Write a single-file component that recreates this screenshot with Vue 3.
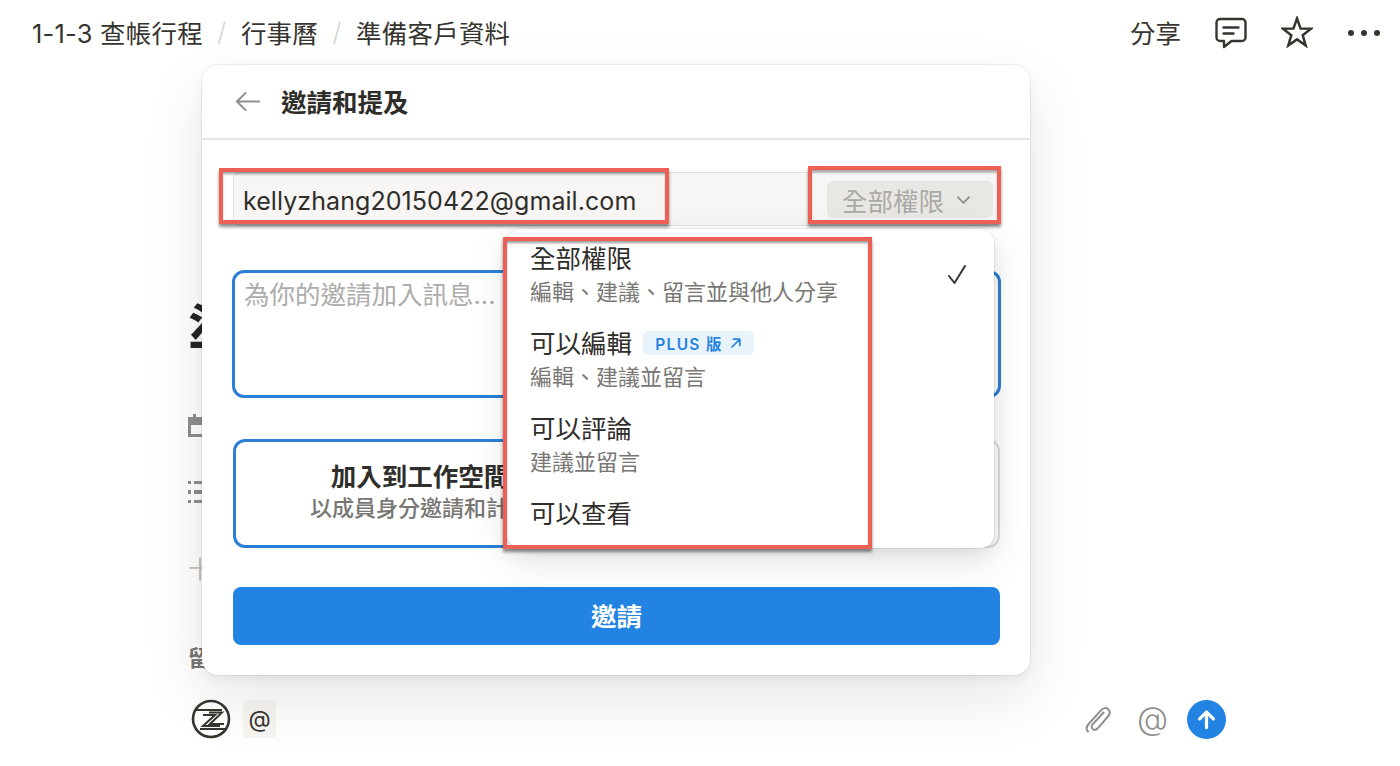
<script setup>
const crumbs = ['1-1-3 查帳行程', '行事曆', '準備客戶資料']
const options = [
  { title: '全部權限', desc: '編輯、建議、留言並與他人分享', checked: true },
  { title: '可以編輯', desc: '編輯、建議並留言', plus: true },
  { title: '可以評論', desc: '建議並留言' },
  { title: '可以查看' }
]
</script>

<template>
  <div class="page">
    <header class="topbar">
      <nav class="crumbs">
        <template v-for="(c, i) in crumbs" :key="c">
          <span v-if="i" class="sep">/</span>
          <span>{{ c }}</span>
        </template>
      </nav>
      <div class="actions">
        <span class="share">分享</span>
        <svg class="ic-comment" viewBox="0 0 32 32" fill="none" stroke="#37352f" stroke-width="2.4" stroke-linejoin="round" stroke-linecap="round">
          <path d="M5 2h22a3.5 3.5 0 0 1 3.5 3.5v15a3.5 3.5 0 0 1-3.5 3.500H16.500L9 30v-6H5a3.500 3.500 0 0 1-3.500-3.500v-15A3.500 3.500 0 0 1 5 2z" />
          <path d="M8.500 10.500h15M8.500 16.500h10" />
        </svg>
        <svg class="ic-star" viewBox="0 0 32 32" fill="none" stroke="#37352f" stroke-width="2.500" stroke-linejoin="miter">
          <path d="M16 2.500l3.600 10.100 10.400.2-8.300 6.400 3 10.300-8.700-6.100-8.700 6.100 3-10.300L2 12.800l10.400-.2z" />
        </svg>
        <div class="dots"><i></i><i></i><i></i></div>
      </div>
    </header>

    <main class="doc">
      <h1 class="doc-title">準</h1>
      <div class="prop">
        <div class="cal"></div>
      </div>
      <div class="prop prop-list">
        <div class="list-ic"><i></i><i></i><i></i></div>
      </div>
      <div class="prop prop-plus"><span class="plus">十</span></div>
      <div class="comments">留言</div>
      <div class="composer">
        <svg class="avatar" viewBox="0 0 40 40" fill="none" stroke="#37352f">
          <circle cx="20" cy="20" r="18" stroke-width="2.600" />
          <path d="M5 11h26M9 30h27" stroke-width="1.800" />
          <path d="M12 16h12L12 27h17" stroke-width="2" />
          <path d="M18 13.500h13L19 25h14" stroke-width="2" />
        </svg>
        <span class="mention">@</span>
        <div class="composer-right">
          <svg class="clip" viewBox="0 0 26 28" fill="none" stroke="#91908d" stroke-width="2" stroke-linecap="round">
            <path d="M18.500 7.500L7.500 19.500c-1.500 1.800-.8 3.800.4 4.700 1.400 1 3.200.8 4.800-.9L23 11.500c2.200-2.600 2-5.500.2-7.200-1.900-1.800-4.800-1.600-7 .8L4 18.500c-3 3.400-2.700 6.300-1 8" />
          </svg>
          <span class="at-grey">@</span>
          <span class="send">
            <svg viewBox="0 0 20 20" fill="none" stroke="#fff" stroke-width="2.800" stroke-linecap="round" stroke-linejoin="round">
              <path d="M10 17V3.500M4 9.500l6-6 6 6" />
            </svg>
          </span>
        </div>
      </div>
    </main>

    <section class="modal">
      <div class="modal-head">
        <svg class="back" viewBox="0 0 28 24" fill="none" stroke="#91908d" stroke-width="2.200" stroke-linecap="round" stroke-linejoin="round">
          <path d="M26 12H3M12 3l-9 9 9 9" />
        </svg>
        <span class="head-title">邀請和提及</span>
      </div>
      <div class="modal-body">
        <div class="invite-row">
          <span class="email">kellyzhang20150422@gmail.com</span>
          <span class="perm">
            全部權限
            <svg viewBox="0 0 16 10" fill="none" stroke="#8d8c89" stroke-width="1.800" stroke-linecap="round" stroke-linejoin="round">
              <path d="M2 2l6 6 6-6" />
            </svg>
          </span>
        </div>
        <div class="message">為你的邀請加入訊息...</div>
        <div class="choices">
          <div class="choice active">
            <strong>加入到工作空間</strong>
            <span>以成員身分邀請和計費</span>
          </div>
          <div class="choice other"></div>
        </div>
        <button class="invite-btn">邀請</button>
      </div>
    </section>

    <div class="menu">
      <div v-for="o in options" :key="o.title" class="opt">
        <div class="opt-title">
          <span>{{ o.title }}</span>
          <span v-if="o.plus" class="plus-badge">
            PLUS 版
            <svg viewBox="0 0 12 12" fill="none" stroke="#2383e2" stroke-width="1.700" stroke-linecap="round" stroke-linejoin="round">
              <path d="M2 10l7.500-7.500M3.500 2.200h6.300v6.300" />
            </svg>
          </span>
        </div>
        <div v-if="o.desc" class="opt-desc">{{ o.desc }}</div>
        <svg v-if="o.checked" class="check" viewBox="0 0 22 22" fill="none" stroke="#37352f" stroke-width="2" stroke-linecap="round" stroke-linejoin="round">
          <path d="M3 12l5.500 7L19 2" />
        </svg>
      </div>
    </div>

    <div class="mark mark-email"></div>
    <div class="mark mark-perm"></div>
    <div class="mark mark-menu"></div>
  </div>
</template>

<style>
html, body { margin: 0; background: #fff; }
</style>

<style scoped>
* { box-sizing: border-box; }
.page {
  position: relative;
  width: 1400px;
  height: 766px;
  overflow: hidden;
  background: #fff;
  color: #37352f;
  font-family: Inter, "Noto Sans CJK TC", "Liberation Sans", sans-serif;
  font-size: 25.5px;
}
.topbar {
  height: 66px;
  display: flex;
  justify-content: space-between;
  align-items: center;
  padding: 0 20px 0 32px;
}
.crumbs { display: flex; gap: 14.500px; align-items: center; letter-spacing: .2px; padding-bottom: 4px; }
.sep { color: #d4d3d0; font-weight: 300; }
.actions { display: flex; align-items: center; }
.share { margin-right: 34px; padding-bottom: 4px; }
.ic-comment { width: 32px; height: 32px; margin-right: 34px; }
.ic-star { width: 32px; height: 32px; margin-right: 35px; margin-top: -2px; }
.dots { display: flex; gap: 7px; }
.dots i { width: 6px; height: 6px; border-radius: 50%; background: #37352f; }

.doc { padding-left: 188px; height: 700px; display: flex; flex-direction: column; }
.doc-title {
  height: 72px;
  margin: 230px 0 0;
  font-size: 57px;
  line-height: 72px;
  font-weight: 700;
  color: #262626;
}
.prop { height: 30px; margin-top: 42px; display: flex; align-items: center; }
.cal {
  position: relative;
  width: 16px;
  height: 20px;
  margin-top: 3px;
  border: 3px solid #8f8e8b;
  border-top-width: 8px;
  border-right: 0;
}
.cal::before {
  content: "";
  position: absolute;
  left: 2px;
  top: -11px;
  width: 3px;
  height: 3px;
  background: #8f8e8b;
}
.prop-list { margin-top: 37px; }
.list-ic { width: 16px; display: flex; flex-direction: column; gap: 6px; }
.list-ic i {
  display: block;
  height: 3.500px;
  background: linear-gradient(to right, #8f8e8b 3.500px, transparent 3.500px, transparent 6px, #8f8e8b 6px);
}
.prop-plus { margin-top: 45px; }
.plus { color: #c4c3c0; font-size: 24px; }
.comments {
  margin-top: 61px;
  font-size: 22px;
  font-weight: 700;
  line-height: 30px;
  color: #787774;
}
.composer {
  margin-top: 26px;
  width: 1038px;
  height: 40px;
  display: flex;
  align-items: center;
}
.avatar { width: 40px; height: 40px; margin-left: 3px; }
.mention {
  width: 33px;
  height: 38px;
  margin-left: 12px;
  border-radius: 4px;
  background: #f7f6f3;
  display: flex;
  align-items: center;
  justify-content: center;
  font-size: 23px;
}
.composer-right { margin-left: auto; display: flex; align-items: center; }
.clip { width: 26px; height: 28px; margin-right: 26px; }
.at-grey { color: #91908d; font-size: 32px; line-height: 38px; margin-right: 19px; font-weight: 300; }
.send {
  width: 39px;
  height: 39px;
  border-radius: 50%;
  background: #2383e2;
  display: flex;
  align-items: center;
  justify-content: center;
}
.send svg { width: 23px; height: 23px; }

.modal {
  position: absolute;
  left: 202px;
  top: 65px;
  width: 828px;
  height: 610px;
  background: #fff;
  border-radius: 16px;
  box-shadow: 0 0 0 1px rgba(15, 15, 15, .05), 0 4px 10px rgba(15, 15, 15, .06), 0 24px 60px rgba(15, 15, 15, .1);
}
.modal-head {
  height: 75px;
  display: flex;
  align-items: center;
  padding-left: 32px;
  gap: 20px;
  border-bottom: 2px solid #e6e5e3;
  font-weight: 700;
  color: #2f2e2a;
}
.head-title { padding-bottom: 3px; }
.back { width: 27px; height: 23px; }
.modal-body { padding: 32px 30px 0 31px; }
.invite-row {
  height: 54px;
  display: flex;
  align-items: center;
  justify-content: space-between;
  padding: 0 6px 0 9px;
  background: #f7f6f4;
  border: 1px solid #e3e2e0;
  border-radius: 6px;
}
.email { color: #2f2e2a; font-size: 25px; letter-spacing: .07px; padding-top: 4px; }
.perm {
  width: 166px;
  height: 37px;
  border-radius: 6px;
  background: #e8e7e4;
  color: #aaa9a6;
  display: flex;
  align-items: center;
  padding-left: 15px;
  gap: 12px;
  margin-top: 1px;
}
.perm svg { width: 15px; height: 10px; }
.message {
  height: 128px;
  margin-top: 44px;
  margin-left: -1px;
  margin-right: -1px;
  border: 3px solid #2b7fd4;
  border-radius: 12px;
  padding: 5px 9px;
  color: #adacaa;
  line-height: 34px;
}
.choices { display: flex; margin-top: 41px; height: 109px; }
.choice { border-radius: 12px; }
.active {
  width: 374px;
  border: 3px solid #2b7fd4;
  display: flex;
  flex-direction: column;
  align-items: center;
  justify-content: center;
  flex-shrink: 0;
  padding-bottom: 4px;
}
.active strong { font-weight: 700; color: #2f2e2a; line-height: 33px; white-space: nowrap; }
.active span { font-size: 22px; font-weight: 500; color: #787774; line-height: 30px; white-space: nowrap; }
.other { flex: 1; border: 2px solid #dfdedb; }
.invite-btn {
  display: block;
  width: 100%;
  height: 58px;
  margin-top: 39px;
  padding: 0 0 4px;
  border: 0;
  border-radius: 8px;
  background: #2383e2;
  color: #fff;
  font: inherit;
  font-weight: 700;
}

.menu {
  position: absolute;
  left: 507px;
  top: 229px;
  width: 487px;
  height: 319px;
  overflow: hidden;
  padding: 11px 0 0 23px;
  background: #fff;
  border-radius: 14px;
  box-shadow: 0 0 0 1px rgba(15, 15, 15, .06), 0 6px 16px rgba(15, 15, 15, .08), 0 14px 40px rgba(15, 15, 15, .1);
}
.opt { position: relative; height: 85px; }
.opt-title { display: flex; align-items: center; height: 32px; color: #2f2e2a; }
.opt-desc { font-size: 22px; color: #787774; line-height: 34px; margin-top: 3px; }
.plus-badge {
  margin-left: 11px;
  width: 111px;
  height: 24px;
  border-radius: 5px;
  background: #e9f3fb;
  color: #2383e2;
  font-size: 15.500px;
  font-weight: 600;
  letter-spacing: 1.300px;
  display: flex;
  align-items: center;
  justify-content: center;
  gap: 7px;
  white-space: nowrap;
  margin-top: 4px;
}
.plus-badge svg { width: 12px; height: 12px; }
.check { position: absolute; left: 416px; top: 24px; width: 22px; height: 22px; }

.mark {
  position: absolute;
  border: 4px solid #ee5f56;
  box-shadow: 0 3px 3px rgba(0, 0, 0, .45), inset 0 3px 3px -1px rgba(0, 0, 0, .4);
  pointer-events: none;
}
.mark-email { left: 219px; top: 168px; width: 450px; height: 56px; }
.mark-perm { left: 808px; top: 166px; width: 193px; height: 58px; }
.mark-menu { left: 503px; top: 237px; width: 369px; height: 312px; }
</style>
